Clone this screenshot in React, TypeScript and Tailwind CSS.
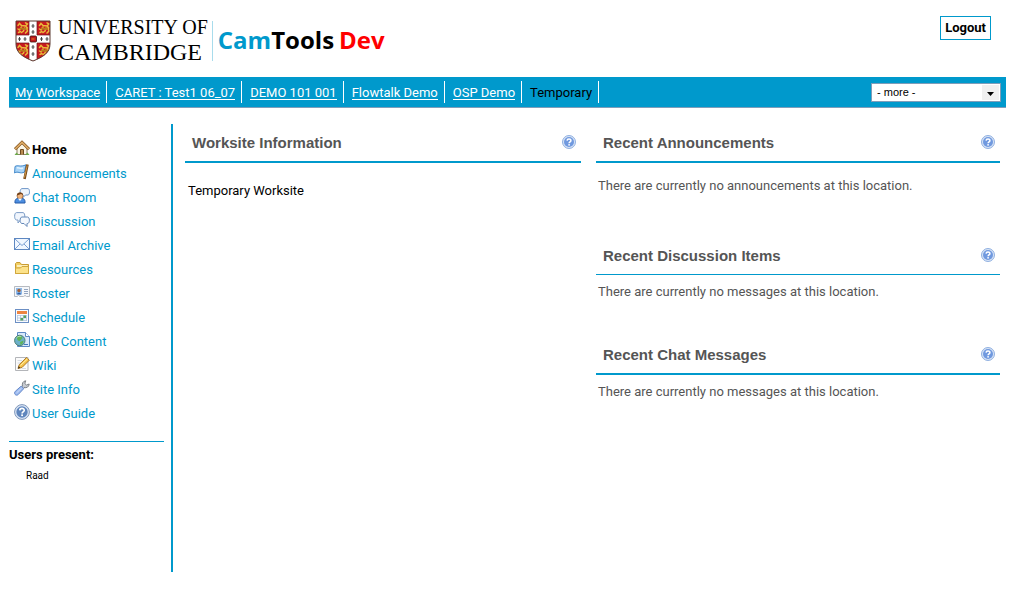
import type { ReactNode } from "react";

const body = "font-['Roboto','Noto_Sans',sans-serif]";

function Shield() {
  const lion = (x: number, y: number) => (
    <g transform={`translate(${x} ${y})`} stroke="#e9b93a" strokeWidth="1.5" fill="none" strokeLinecap="round">
      <path d="M1.500 3.500L3 1.500L5 3.500L9 4L11 6M5 5L3 8L1.500 7M8 6L7 9L5 10.500M10 6L11 9L9 11M9 4L11 2L9 .8M2 10.500L4 9.500" />
      <path d="M4 6.500L9 7" strokeWidth="2" stroke="#b8791c" />
    </g>
  );
  return (
    <svg width="36" height="42" viewBox="0 0 36 42" aria-hidden="true">
      <defs>
        <clipPath id="shield">
          <path d="M1 1H35V24C35 33 28 37 18 41C8 37 1 33 1 24Z" />
        </clipPath>
      </defs>
      <g clipPath="url(#shield)">
        <rect width="36" height="42" fill="#c8191f" />
        {lion(1.5, 2)}
        {lion(23, 2)}
        {lion(1.5, 24)}
        {lion(23, 24)}
        <path d="M14 0H22V42H14ZM0 15H36V23H0Z" fill="#fff" />
        <path d="M14 0V15H0M22 0V15H36M14 42V23H0M22 42V23H36" fill="none" stroke="#6b1518" strokeWidth=".7" />
        <g fill="#444">
          <path d="M17.500 4h1v1.500h1v1h-1v1.500h-1v-1.500h-1v-1h1zM17.500 10h1v1.500h1v1h-1v1.500h-1v-1.500h-1v-1h1zM17.500 25h1v1.500h1v1h-1v1.500h-1v-1.500h-1v-1h1zM17.500 32h1v1.500h1v1h-1v1.500h-1v-1.500h-1v-1h1z" />
          <path d="M4 17h1v1.500h1v1h-1v1.500h-1v-1.500h-1v-1h1zM9.500 17h1v1.500h1v1h-1v1.500h-1v-1.500h-1v-1h1zM26 17h1v1.500h1v1h-1v1.500h-1v-1.500h-1v-1h1zM31.500 17h1v1.500h1v1h-1v1.500h-1v-1.500h-1v-1h1z" />
        </g>
        <rect x="15" y="16" width="6.500" height="6" rx="1" fill="#c0181c" stroke="#3a1010" strokeWidth=".8" />
        <path d="M16.500 19h3" stroke="#e8862a" />
      </g>
      <path d="M1 1H35V24C35 33 28 37 18 41C8 37 1 33 1 24Z" fill="none" stroke="#5a3a30" />
    </svg>
  );
}

function HelpBadge({ size, rim, fill }: { size: number; rim: string; fill: string }) {
  return (
    <svg width={size} height={size} viewBox="0 0 16 16" aria-hidden="true">
      <circle cx="8" cy="8" r="7.400" fill="#dbe6f6" stroke={rim} />
      <circle cx="8" cy="8" r="5.700" fill={fill} />
      <path d="M5.800 6.400C5.900 3.700 10.300 3.900 10.200 6.400C10.100 7.900 8.100 7.800 8.100 9.400" fill="none" stroke="#fff" strokeWidth="1.700" />
      <rect x="7.200" y="10.400" width="1.800" height="1.700" fill="#fff" />
    </svg>
  );
}

const glyphs: Record<string, ReactNode> = {
  Home: (
    <>
      <path d="M3 8V14.500H13V8L8 3.500Z" fill="#faf5e6" stroke="#8c8068" />
      <path d="M6.500 14.500V9.500H9.500V14.500" fill="#b98a50" stroke="#6f4a1f" />
      <path d="M1 9.200L8 2.300L15 9.200" fill="none" stroke="#8a5a22" strokeWidth="3" />
      <path d="M1.200 9L8 2.400L14.800 9" fill="none" stroke="#e0ae6a" strokeWidth="1.500" />
      <path d="M.5 15L2.500 12.500L5 15ZM11 15L13.500 12.500L15.500 15Z" fill="#6caa4a" />
    </>
  ),
  Announcements: (
    <>
      <path d="M1 2.500C4 .5 6 3.500 12 .8L10.500 8C6 10.500 4 6.500 .6 9Z" fill="#a9d4f7" stroke="#4187c9" />
      <path d="M3 4C5 3 6 5.500 9 4" stroke="#e3f3ff" strokeWidth="1.500" fill="none" />
      <path d="M13.500 .5L10.500 15" stroke="#7b4a17" strokeWidth="2.600" />
      <path d="M13.200 1.500L10.500 13.500" stroke="#d09a4c" />
    </>
  ),
  "Chat Room": (
    <>
      <path d="M8 .6H14C16 .6 16 7 14 7H11.500L9 9.500V7H8C5.500 7 5.500 .6 8 .6Z" fill="#eef5fd" stroke="#6e96c8" />
      <path d="M1 15C.5 11 3 10 6 10S11.500 11 11 15Z" fill="#4c8ee0" stroke="#255ba8" />
      <circle cx="6" cy="7.800" r="3" fill="#f0b47c" stroke="#94592b" strokeWidth=".7" />
      <path d="M3 7.500C2.500 3.500 9.500 3.500 9 7L7 6Z" fill="#70401c" />
      <path d="M4 10.500L6 13L8 10.500Z" fill="#fff" />
    </>
  ),
  Discussion: (
    <>
      <path d="M2.500 .6H9C11.400 .6 11.400 8 9 8H6.500L4 11V8H2.500C0 8 0 .6 2.500 .6Z" fill="#f1f6fd" stroke="#7c9cc6" />
      <path d="M8 5H13.500C16 5 16 11.500 13.500 11.500H13V14.500L10 11.500H8C5.500 11.500 5.500 5 8 5Z" fill="#f5f9fe" stroke="#6488b8" />
    </>
  ),
  "Email Archive": (
    <>
      <rect x=".5" y="2.500" width="15" height="11" fill="#f1f7ff" stroke="#5d87c1" />
      <path d="M1 3L8 9.500L15 3M1 13L6 8M15 13L10 8" fill="none" stroke="#7ba0d2" />
    </>
  ),
  Resources: (
    <>
      <path d="M1.500 13.500V3.500L2.500 2.500H6L7.500 4.500H14.500V13.500Z" fill="#f2cf63" stroke="#c99b33" />
      <path d="M3 6H13.500" stroke="#fff8d8" strokeWidth="1.500" />
      <path d="M1.500 13.500V8H6.500L8 6.500H14.500V13.500Z" fill="#fce28a" stroke="#d1a73c" />
    </>
  ),
  Roster: (
    <>
      <path d="M.5 2.500H15.500V12.500H12.500L11 11.500L9.500 12.500H6L4.500 11.500L3 12.500H.5Z" fill="#f5f7fa" stroke="#b6bac0" />
      <rect x="2" y="4" width="6" height="6.500" fill="#8db8e8" />
      <circle cx="5" cy="6.500" r="1.700" fill="#a4643a" />
      <path d="M3 10.500C3 8 7 8 7 10.500Z" fill="#2d5ea5" />
      <path d="M10 5.500H14M10 7.500H14M10 9.500H14" stroke="#93a5c0" />
    </>
  ),
  Schedule: (
    <>
      <rect x="1.500" y="1.500" width="13" height="13" fill="#f8fbff" stroke="#6c8fc4" />
      <rect x="3" y="3" width="10" height="3" fill="#ee8541" />
      <path d="M3.500 7V13M6.500 7V13M9.500 7V13M12.500 7V13M3 7.500H13M3 10H13M3 12.500H13" stroke="#b4c5dc" strokeWidth=".8" />
      <path d="M9.500 7.500H12V10H9.500ZM6.500 10H9V12.500H6.500Z" fill="#55a05a" />
    </>
  ),
  "Web Content": (
    <>
      <path d="M3.500 .5H11.500L15.500 4.500V14.500H3.500Z" fill="#d8e9fc" stroke="#5c89c4" />
      <path d="M11.500 .5V4.500H15.500" fill="#fff" stroke="#5c89c4" />
      <path d="M10 12.500H14" stroke="#4178bd" />
      <circle cx="5.800" cy="8.500" r="5.200" fill="#6bb0c9" stroke="#4c7f73" />
      <path d="M3 5C6 3 8 4 8.500 6C7 7 7 9 5 9C3 8 3 7 3 5ZM6 10L9.500 8.500C9.500 11 8 12.500 6.500 13Z" fill="#61b455" />
      <path d="M2.500 6C4 4 6 4 7 4.500" stroke="#b7e1ae" fill="none" />
    </>
  ),
  Wiki: (
    <>
      <path d="M1.500 1.500H14V14.500H1.500Z" fill="#fbfbfb" stroke="#b3b5b9" />
      <path d="M3.500 4.500H8M3.500 7H7M8 12.500H12" stroke="#d7dce2" />
      <path d="M4 12.500L5.200 8.700L12.500 1.500L15.300 4.200L8 11.500Z" fill="#f6c34b" stroke="#a36e20" strokeWidth=".9" />
      <path d="M6.500 9.500L13.500 2.800" stroke="#fff0a8" />
      <path d="M4 12.500L4.700 10.200L6.300 11.800Z" fill="#3c2c18" />
    </>
  ),
  "Site Info": (
    <>
      <path d="M7 7.500L8.500 6C7.800 3.500 9 1 11.800 .8L10.800 3.500L12.500 5L15.200 4C15 7 12.500 8.300 10 7.500L8.500 9Z" fill="#c7cbd1" stroke="#75797f" strokeWidth=".9" />
      <path d="M7.300 6L1.300 11.300C-.8 13.500 2 16.500 4.200 14.600L9.700 8.700Z" fill="#9dbbf0" stroke="#5f82c4" strokeWidth=".9" />
      <path d="M7.500 8.200L2.500 13" stroke="#cfdef8" />
    </>
  ),
};

function MenuIcon({ name }: { name: string }) {
  if (name === "User Guide") return <HelpBadge size={16} rim="#7f97ba" fill="#5f86bd" />;
  return (
    <svg width="16" height="16" viewBox="0 0 16 16" aria-hidden="true">
      {glyphs[name]}
    </svg>
  );
}

const sites = ["My Workspace", "CARET : Test1 06_07", "DEMO 101 001", "Flowtalk Demo", "OSP Demo"];
const tools = [
  "Home",
  "Announcements",
  "Chat Room",
  "Discussion",
  "Email Archive",
  "Resources",
  "Roster",
  "Schedule",
  "Web Content",
  "Wiki",
  "Site Info",
  "User Guide",
];

function PanelHead({ title, thin }: { title: string; thin?: boolean }) {
  return (
    <div
      className={`flex items-center justify-between border-[#0099cc] pr-[5px] pl-[7px] ${thin ? "h-[38px] border-b" : "h-[39px] border-b-2"}`}
    >
      <h2 className="font-['Liberation_Sans',Arial,sans-serif] text-[15px] leading-5 font-bold text-[#555]">{title}</h2>
      <button type="button" aria-label={`Help: ${title}`} className="pb-px">
        <HelpBadge size={14} rim="#7fa3dc" fill="#7099df" />
      </button>
    </div>
  );
}

export default function App() {
  return (
    <div className={`${body} bg-white text-[13px] leading-[22px] text-black`}>
      <header className="flex h-[77px] items-start justify-between pr-[23px] pl-[15px]">
        <div className="flex items-center pt-4">
          <Shield />
          <div className="ml-[7px] flex flex-col font-['Liberation_Serif',serif]">
            <span className="text-[20px] leading-[23px]">UNIVERSITY OF</span>
            <span className="text-[24px] leading-[27px]">CAMBRIDGE</span>
          </div>
          <div className="ml-1 flex h-10 items-center border-l border-[#a8dcec] pb-[2px] pl-[5px] font-['Open_Sans',sans-serif] text-[24px] font-bold">
            <span className="text-[#0099cc]">Cam</span>
            <span>Tools</span>
            <span className="ml-[5px] text-[#ff0000]">Dev</span>
          </div>
        </div>
        <a href="#logout" className="mt-4 border border-[#0099cc] px-1 font-bold">
          Logout
        </a>
      </header>

      <nav className="mr-2 ml-[9px] flex h-[31px] items-center justify-between border-b border-[#7f9db9] bg-[#0099cc] pr-[5px]">
        <ul className="flex leading-6">
          {sites.map((s, i) => (
            <li key={s} className={`h-[22px] border-r border-white pr-[6px] ${i === 0 ? "pl-[6px]" : "pl-2"}`}>
              <a href="#site" className="inline-block h-[19px] border-b border-white text-white">
                {s}
              </a>
            </li>
          ))}
          <li className="h-[22px] border-r border-white pr-[6px] pl-2">Temporary</li>
        </ul>
        <div className="relative flex">
          <select
            aria-label="More sites"
            className="h-[19px] w-[130px] appearance-none border border-[#7f9db9] bg-white pl-[5px] font-['Liberation_Sans',Arial,sans-serif] text-[11px] leading-4"
          >
            <option>- more -</option>
          </select>
          <span className="pointer-events-none absolute inset-y-[2px] right-[2px] flex w-[17px] items-end justify-center bg-[#f0f0f0] pb-1">
            <svg width="7" height="4" viewBox="0 0 7 4" aria-hidden="true">
              <path d="M0 0H7L3.500 4Z" />
            </svg>
          </span>
        </div>
      </nav>

      <div className="mt-4 flex pr-[14px] pl-[9px]">
        <aside className="mr-[7px] w-[155px] shrink-0 pt-[13px]">
          <ul>
            {tools.map((t) => (
              <li key={t}>
                <a
                  href="#tool"
                  className={`flex h-6 items-center gap-[2px] pt-[2px] pl-[5px] ${t === "Home" ? "font-bold text-black" : "text-[#0099cc]"}`}
                >
                  <span className="pb-1">
                    <MenuIcon name={t} />
                  </span>
                  {t}
                </a>
              </li>
            ))}
          </ul>
          <section className="mt-4 border-t border-[#0099cc] pt-[2px]">
            <h2 className="font-bold">Users present:</h2>
            <p className="pl-[17px] text-[10px] leading-5">Raad</p>
          </section>
        </aside>
        <main className="grid min-h-[448px] flex-1 grid-cols-[396fr_404fr] content-start gap-x-[15px] border-l-2 border-[#0099cc] pl-3">
          <section>
            <PanelHead title="Worksite Information" />
            <p className="pt-[17px] pl-[3px]">Temporary Worksite</p>
          </section>
          <div className="text-[#555]">
            <section className="mb-10">
              <PanelHead title="Recent Announcements" />
              <p className="pt-3 pl-[2px]">There are currently no announcements at this location.</p>
            </section>
            <section className="mb-[33px]">
              <PanelHead title="Recent Discussion Items" thin />
              <p className="pt-[6px] pl-[2px]">There are currently no messages at this location.</p>
            </section>
            <section>
              <PanelHead title="Recent Chat Messages" />
              <p className="pt-[6px] pl-[2px]">There are currently no messages at this location.</p>
            </section>
          </div>
        </main>
      </div>
    </div>
  );
}
